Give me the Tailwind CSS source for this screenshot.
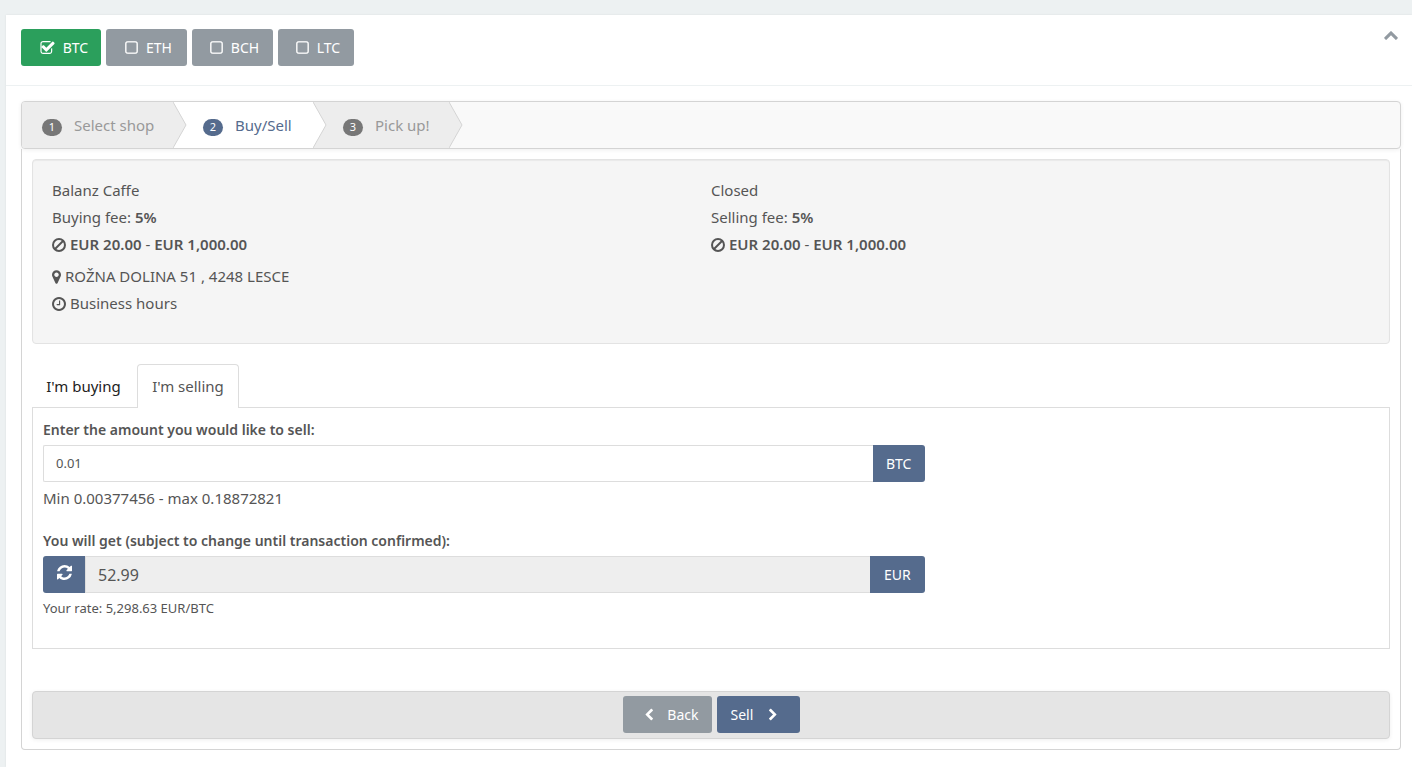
<!DOCTYPE html>
<html lang="en">
<head>
<meta charset="utf-8">
<meta name="viewport" content="width=device-width, initial-scale=1">
<title>Buy/Sell</title>
<script src="https://cdn.jsdelivr.net/npm/@tailwindcss/browser@4"></script>
</head>
<body class="min-h-screen bg-[#edf1f2] pt-[15px] pl-1.5 font-['Noto_Sans',sans-serif] text-[15px] leading-[27px] text-[#555]">
<svg class="hidden" aria-hidden="true">
  <symbol id="square" viewBox="172 108 1448 1448"><path stroke="currentColor" stroke-width="40" d="M1312 256h-832q-66 0-113 47t-47 113v832q0 66 47 113t113 47h832q66 0 113-47t47-113v-832q0-66-47-113t-113-47zm288 160v832q0 119-84.5 203.5t-203.5 84.5h-832q-119 0-203.5-84.5t-84.5-203.5v-832q0-119 84.5-203.5t203.5-84.5h832q119 0 203.5 84.5t84.5 203.5z"/></symbol>
  <symbol id="ban" viewBox="128 128 1536 1536"><g fill="none" stroke="currentColor" stroke-width="220"><circle cx="896" cy="896" r="656"/><path d="M430 1362L1362 430"/></g></symbol>
</svg>
<main class="min-h-[calc(100vh-15px)] bg-white shadow-[0_0_2px_rgba(0,0,0,0.08)]">
  <header class="flex items-start justify-between border-b border-[#edf1f2] pt-3.5 pr-3.5 pb-[19px] pl-[15px]">
    <div class="flex gap-[5px] text-sm text-white">
      <button type="button" aria-pressed="true" class="flex h-[37px] w-20 items-center justify-center gap-2 rounded-[3px] bg-[#2b9f5c] pl-1.5">
        <svg class="h-[13px] w-[15px]" viewBox="192 128 1536 1408" fill="currentColor"><path d="M1472 930v318q0 119-84.5 203.5t-203.5 84.5h-704q-119 0-203.5-84.5t-84.5-203.5v-832q0-119 84.5-203.5t203.5-84.5h704q63 0 117 25 15 7 18 23 3 17-9 29l-49 49q-10 10-23 10-3 0-9-2-23-6-45-6h-704q-66 0-113 47t-47 113v832q0 66 47 113t113 47h704q66 0 113-47t47-113v-254q0-13 9-22l64-64q10-10 23-10 6 0 12 3 20 8 20 29zm231-489l-814 814q-24 24-57 24t-57-24l-430-430q-24-24-24-57t24-57l110-110q24-24 57-24t57 24l263 263 647-647q24-24 57-24t57 24l110 110q24 24 24 57t-24 57z"/></svg>BTC</button>
      <button type="button" aria-pressed="false" class="flex h-[37px] w-[81px] items-center justify-center gap-2 rounded-[3px] bg-[#929aa1] pl-1"><svg class="size-[13px]" fill="currentColor"><use href="#square"/></svg>ETH</button>
      <button type="button" aria-pressed="false" class="flex h-[37px] w-[81px] items-center justify-center gap-2 rounded-[3px] bg-[#929aa1] pl-1"><svg class="size-[13px]" fill="currentColor"><use href="#square"/></svg>BCH</button>
      <button type="button" aria-pressed="false" class="flex h-[37px] w-[76px] items-center justify-center gap-2 rounded-[3px] bg-[#929aa1] pl-1"><svg class="size-[13px]" fill="currentColor"><use href="#square"/></svg>LTC</button>
    </div>
    <button type="button" aria-label="Collapse" class="mt-0.5 text-[#929aa1]"><svg class="h-[9px] w-3.5" viewBox="90 470 1612 1055" fill="currentColor"><path d="M1683 1331l-166 165q-19 19-45 19t-45-19l-531-531-531 531q-19 19-45 19t-45-19l-166-165q-19-19-19-45.5t19-45.5l742-741q19-19 45-19t45 19l742 741q19 19 19 45.5t-19 45.5z"/></svg></button>
  </header>

  <div class="pt-[15px] pr-[11px] pb-[17px] pl-[15px]">
    <ol class="flex h-12 overflow-hidden rounded-[4px] border border-[#d4d4d4] bg-[#f9f9f9] text-[#999] shadow-[0_1px_4px_rgba(0,0,0,0.065)]">
      <li class="relative z-30 flex w-[151px] items-center gap-3 bg-[#ededed] pl-5">
        <span class="mt-1 flex h-[17px] w-5 items-center justify-center rounded-full bg-[#777] pb-0.5 text-[11px] text-white">1</span><span>Select shop</span>
        <svg class="absolute top-0 left-full h-full w-3.5" viewBox="0 0 14 46" preserveAspectRatio="none"><path d="M0 0L13 23L0 46" fill="#ededed" stroke="#d4d4d4"/></svg>
      </li>
      <li aria-current="step" class="relative z-20 flex w-[140px] items-center gap-3 bg-white pl-[30px] text-[#556b8d]">
        <span class="mt-1 flex h-[17px] w-5 items-center justify-center rounded-full bg-[#556b8d] pb-0.5 text-[11px] text-white">2</span><span>Buy/Sell</span>
        <svg class="absolute top-0 left-full h-full w-3.5" viewBox="0 0 14 46" preserveAspectRatio="none"><path d="M0 0L13 23L0 46" fill="#fff" stroke="#d4d4d4"/></svg>
      </li>
      <li class="relative z-10 flex w-[136px] items-center gap-3 bg-[#ededed] pl-[30px]">
        <span class="mt-1 flex h-[17px] w-5 items-center justify-center rounded-full bg-[#777] pb-0.5 text-[11px] text-white">3</span><span>Pick up!</span>
        <svg class="absolute top-0 left-full h-full w-3.5" viewBox="0 0 14 46" preserveAspectRatio="none"><path d="M0 0L13 23L0 46" fill="#ededed" stroke="#d4d4d4"/></svg>
      </li>
    </ol>

    <div class="rounded-b-[4px] border border-t-0 border-[#d4d4d4] p-2.5">
      <section class="grid grid-cols-2 rounded-[4px] border border-[#e3e3e3] bg-[#f5f5f5] px-[19px] pt-[17px] pb-[26px] shadow-[inset_0_1px_1px_rgba(0,0,0,0.05)]">
        <div>
          <p>Balanz Caffe</p>
          <p>Buying fee: <b class="font-semibold">5%</b></p>
          <p class="flex items-center gap-1"><svg class="size-3.5"><use href="#ban"/></svg><span><b class="font-semibold">EUR 20.00</b> - <b class="font-semibold">EUR 1,000.00</b></span></p>
          <p class="mt-[5px] flex items-center gap-1"><svg class="h-3.5 w-[9px]" viewBox="384 128 1024 1536" fill="currentColor"><path d="M1152 640q0-106-75-181t-181-75-181 75-75 181 75 181 181 75 181-75 75-181zm256 0q0 109-33 179l-364 774q-16 33-47.5 52t-67.5 19-67.5-19-46.5-52l-365-774q-33-70-33-179 0-212 150-362t362-150 362 150 150 362z"/></svg>ROŽNA DOLINA 51 , 4248 LESCE</p>
          <a href="#hours" class="flex items-center gap-1"><svg class="size-3.5" viewBox="128 128 1536 1536" fill="currentColor"><path d="M1024 544v448q0 14-9 23t-23 9h-320q-14 0-23-9t-9-23v-64q0-14 9-23t23-9h224v-352q0-14 9-23t23-9h64q14 0 23 9t9 23zm416 352q0-148-73-273t-198-198-273-73-273 73-198 198-73 273 73 273 198 198 273 73 273-73 198-198 73-273zm224 0q0 209-103 385.5t-279.5 279.5-385.5 103-385.5-103-279.5-279.5-103-385.5 103-385.5 279.5-279.5 385.5-103 385.5 103 279.5 279.5 103 385.5z"/></svg>Business hours</a>
        </div>
        <div>
          <p>Closed</p>
          <p>Selling fee: <b class="font-semibold">5%</b></p>
          <p class="flex items-center gap-1"><svg class="size-3.5"><use href="#ban"/></svg><span><b class="font-semibold">EUR 20.00</b> - <b class="font-semibold">EUR 1,000.00</b></span></p>
        </div>
      </section>

      <div role="tablist" class="mt-5 flex">
        <button type="button" role="tab" aria-selected="false" class="h-11 w-[105px] pr-0.5 text-center text-[#222]">I'm buying</button>
        <button type="button" role="tab" aria-selected="true" class="relative z-10 h-11 w-[102px] rounded-t-[4px] border border-b-0 border-[#ddd] bg-white text-center">I'm selling</button>
      </div>
      <form class="-mt-px border border-[#ddd] px-2.5 pt-2 pb-[26px]">
        <label for="amount" class="block text-sm leading-[27px] font-semibold">Enter the amount you would like to sell:</label>
        <div class="mt-0.5 flex h-[37px] w-[66%]">
          <input id="amount" type="text" value="0.01" class="min-w-0 flex-1 rounded-l-[2px] border border-r-0 border-[#ddd] bg-white px-3 text-[13px]">
          <button type="button" class="w-[52px] rounded-r-[3px] bg-[#556b8d] text-sm text-white">BTC</button>
        </div>
        <p class="mt-[3px]">Min 0.00377456 - max 0.18872821</p>
        <label for="result" class="mt-[15px] block text-sm leading-[27px] font-semibold">You will get (subject to change until transaction confirmed):</label>
        <div class="mt-0.5 flex h-[37px] w-[66%]">
          <button type="button" aria-label="Refresh rate" class="flex w-[42px] items-center justify-center rounded-l-[3px] bg-[#556b8d] pb-1 text-white"><svg class="size-[15px]" viewBox="128 128 1536 1536" fill="currentColor"><path d="M1639 1056q0 5-1 7-64 268-268 434.5t-478 166.5q-146 0-282.5-55t-243.5-157l-129 129q-19 19-45 19t-45-19-19-45v-448q0-26 19-45t45-19h448q26 0 45 19t19 45-19 45l-137 137q71 66 161 102t187 36q134 0 250-65t186-179q11-17 53-117 8-23 30-23h192q13 0 22.5 9.5t9.5 22.5zm25-800v448q0 26-19 45t-45 19h-448q-26 0-45-19t-19-45 19-45l138-138q-148-137-349-137-134 0-250 65t-186 179q-11 17-53 117-8 23-30 23h-199q-13 0-22.5-9.5t-9.5-22.5v-7q65-268 270-434.5t480-166.5q146 0 284 55.5t245 156.5l130-129q19-19 45-19t45 19 19 45z"/></svg></button>
          <input id="result" type="text" readonly value="52.99" class="min-w-0 flex-1 border border-r-0 border-[#ddd] bg-[#eee] px-3 text-base">
          <button type="button" class="w-[55px] rounded-r-[3px] bg-[#556b8d] text-sm text-white">EUR</button>
        </div>
        <p class="mt-0.5 text-[13px] leading-[27px]">Your rate: 5,298.63 EUR/BTC</p>
      </form>

      <div class="mt-[42px] flex h-12 items-start justify-center gap-[5px] rounded-[4px] border border-[#d4d4d4] bg-[#e5e5e5] pt-1 text-sm text-white shadow-[0_1px_4px_rgba(0,0,0,0.065)]">
        <button type="button" class="flex h-[37px] w-[89px] items-center justify-end gap-3.5 rounded-[3px] bg-[#929aa1] pr-[13px]"><svg class="h-[13px] w-2" viewBox="346 7 1100 1650" fill="currentColor"><path d="M1427 301l-531 531 531 531q19 19 19 45t-19 45l-166 166q-19 19-45 19t-45-19l-742-742q-19-19-19-45t19-45l742-742q19-19 45-19t45 19l166 166q19 19 19 45t-19 45z"/></svg>Back</button>
        <button type="button" class="flex h-[37px] w-[83px] items-center gap-4 rounded-[3px] bg-[#556b8d] pl-3.5">Sell<svg class="h-[13px] w-2" viewBox="346 7 1100 1650" fill="currentColor"><path d="M1363 877l-742 742q-19 19-45 19t-45-19l-166-166q-19-19-19-45t19-45l531-531-531-531q-19-19-19-45t19-45l166-166q19-19 45-19t45 19l742 742q19 19 19 45t-19 45z"/></svg></button>
      </div>
    </div>
  </div>
</main>
</body>
</html>
